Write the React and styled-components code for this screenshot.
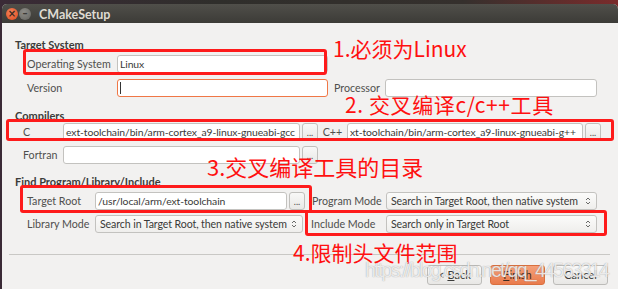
import React from 'react'
import styled, { createGlobalStyle } from 'styled-components'

const GlobalStyle = createGlobalStyle`
  body {
    margin: 0;
    background: #2f2e2b;
    font-family: Lato, 'Open Sans', sans-serif;
  }
`

const Spinner = () => (
  <svg width="6" height="10" viewBox="0 0 6 10">
    <path d="M1 4 L3 2 L5 4" fill="none" stroke="#6a6a68" strokeWidth="1" />
    <path d="M1 6 L3 8 L5 6" fill="none" stroke="#6a6a68" strokeWidth="1" />
  </svg>
)

export default () => (
  <Desktop>
    <GlobalStyle />
    <Window>
      <TitleBar>
        <CloseDot>×</CloseDot>
        <MinDot>–</MinDot>
        <Title>CMakeSetup</Title>
      </TitleBar>
      <Body>
        <Heading $top={15}>Target System</Heading>
        <SystemGrid>
          <Label>Operating System</Label>
          <Field>Linux</Field>
          <span />
          <span />
          <Label>Version</Label>
          <Field $focus>
            <Caret />
          </Field>
          <Label $pad={6}>Processor</Label>
          <Field />
        </SystemGrid>

        <Heading $top={12}>Compilers</Heading>
        <CompilerGrid>
          <Label>C</Label>
          <Field>ext-toolchain/bin/arm-cortex_a9-linux-gnueabi-gcc</Field>
          <DotButton>...</DotButton>
          <Label $center>C++</Label>
          <Field>xt-toolchain/bin/arm-cortex_a9-linux-gnueabi-g++</Field>
          <DotButton>...</DotButton>
          <Label>Fortran</Label>
          <Field />
          <DotButton>...</DotButton>
        </CompilerGrid>

        <Heading $top={11}>Find Program/Library/Include</Heading>
        <FindGrid>
          <Label>Target Root</Label>
          <PathCell>
            <Field>/usr/local/arm/ext-toolchain</Field>
            <DotButton>...</DotButton>
          </PathCell>
          <Label $pad={7}>Program Mode</Label>
          <Select>
            <span>Search in Target Root, then native system</span>
            <Spinner />
          </Select>
          <Label>Library Mode</Label>
          <Select $trim={2}>
            <span>Search in Target Root, then native system</span>
            <Spinner />
          </Select>
          <Label $pad={6}>Include Mode</Label>
          <Select>
            <span>Search only in Target Root</span>
            <Spinner />
          </Select>
        </FindGrid>

        <Separator />
        <ButtonRow>
          <PushButton>
            &lt; <u>B</u>ack
          </PushButton>
          <PushButton $primary>
            <u>F</u>inish
          </PushButton>
          <PushButton>Cancel</PushButton>
        </ButtonRow>
      </Body>
    </Window>

    <Mark $x={23} $y={49} $w={304} $h={26} />
    <Mark $x={6} $y={119} $w={608} $h={22} />
    <Mark $x={20} $y={185} $w={292} $h={28} />
    <Mark $x={305} $y={210} $w={302} $h={26} />

    <Note $x={333} $y={35} $size={21}>1.必须为Linux</Note>
    <Note $x={345} $y={91} $size={21} $spread={0.6}>2. 交叉编译c/c++工具</Note>
    <Note $x={207} $y={153} $size={22}>3.交叉编译工具的目录</Note>
    <Note $x={293} $y={239} $size={21}>4.限制头文件范围</Note>

    <Watermark>https://blog.csdn.net/qq_44563314</Watermark>
  </Desktop>
)

const Desktop = styled.div`
  position: relative;
  width: 618px;
  height: 289px;
  overflow: hidden;
  box-sizing: border-box;
  padding: 4px 0 0 2px;
  background: linear-gradient(90deg, #3a2a36 0%, #2f2e2b 35%, #35302d 75%, #7a2b2b 100%);
`

const Window = styled.div`
  width: 616px;
  height: 285px;
  display: flex;
  flex-direction: column;
  background: #f2f1f0;
  border-radius: 5px 5px 0 0;
  overflow: hidden;
`

const TitleBar = styled.div`
  height: 18px;
  flex: none;
  display: flex;
  align-items: center;
  padding: 1px 0 0 4px;
  background: linear-gradient(#504f4a, #3c3b37);
`

const CloseDot = styled.div`
  width: 12px;
  height: 12px;
  border-radius: 50%;
  background: radial-gradient(circle at 40% 35%, #f5835a, #dd4a1e);
  color: #3a2a20;
  font: bold 10px/12px 'DejaVu Sans', sans-serif;
  text-align: center;
`

const MinDot = styled(CloseDot)`
  margin-left: 1px;
  background: radial-gradient(circle at 40% 35%, #8e8d88, #64635f);
  color: #3c3b37;
`

const Title = styled.div`
  margin-left: 8px;
  color: #dfdbd2;
  font-size: 12.5px;
  font-weight: 700;
`

const Body = styled.div`
  flex: 1;
  padding: 0 8px 0 13px;
  color: #4a4a48;
`

const Heading = styled.div`
  margin-top: ${(p) => p.$top}px;
  font-size: 11px;
  line-height: 13px;
  font-weight: 700;
  color: #3c3c3a;
`

const SystemGrid = styled.div`
  display: grid;
  grid-template-columns: 90px 211px 57px 212px;
  grid-auto-rows: 18px;
  row-gap: 6px;
  margin: 4px 0 0 12px;
`

const CompilerGrid = styled.div`
  display: grid;
  grid-template-columns: 40px 237px 18px 29px 236px 18px;
  grid-auto-rows: 18px;
  row-gap: 5px;
  margin: 1px 0 0 8px;
`

const FindGrid = styled.div`
  display: grid;
  grid-template-columns: 68px 210px 81px 211px;
  grid-auto-rows: 18px;
  row-gap: 5px;
  margin: 4px 0 0 12px;
`

const PathCell = styled.div`
  display: grid;
  grid-template-columns: 192px 18px;
`

const Label = styled.div`
  font-size: 10.7px;
  line-height: 18px;
  white-space: nowrap;
  color: #4f4f4d;
  padding-left: ${(p) => p.$pad || 0}px;
  text-align: ${(p) => (p.$center ? 'center' : 'left')};
`

const Field = styled.div`
  box-sizing: border-box;
  height: 18px;
  padding: 0 2px;
  background: #fff;
  border: 1px solid ${(p) => (p.$focus ? '#f07746' : '#c3c2bf')};
  border-radius: 3px;
  font-size: 10.4px;
  letter-spacing: -0.1px;
  line-height: 16px;
  color: #3a3a38;
  white-space: nowrap;
  overflow: hidden;
`

const Caret = styled.span`
  display: inline-block;
  width: 1px;
  height: 12px;
  margin-top: 2px;
  background: #333;
  vertical-align: top;
`

const DotButton = styled.div`
  box-sizing: border-box;
  width: 16px;
  height: 18px;
  margin-left: 2px;
  border: 1px solid #c0bfbc;
  border-radius: 3px;
  background: linear-gradient(#f8f8f7, #e9e8e6);
  font-size: 9px;
  line-height: 18px;
  text-align: center;
  color: #4a4a48;
`

const Select = styled.div`
  box-sizing: border-box;
  height: 18px;
  margin-right: ${(p) => p.$trim || 0}px;
  padding: 0 5px 0 4px;
  display: flex;
  align-items: center;
  justify-content: space-between;
  gap: 2px;
  border: 1px solid #c3c2bf;
  border-radius: 3px;
  background: linear-gradient(#fbfbfa, #efeeec);
  font-size: 10.6px;
  letter-spacing: -0.1px;
  color: #3a3a38;
  white-space: nowrap;
  overflow: hidden;

  svg {
    flex: none;
  }
`

const Separator = styled.div`
  height: 1px;
  margin: 21px 0 0 -6px;
  background: #c9c8c5;
`

const ButtonRow = styled.div`
  display: flex;
  justify-content: flex-end;
  gap: 8px;
  margin: 10px 2px 0 0;
`

const PushButton = styled.div`
  box-sizing: border-box;
  width: 55px;
  height: 20px;
  border: 1px solid ${(p) => (p.$primary ? '#d9703f' : '#bdbcb9')};
  border-radius: 3px;
  background: ${(p) =>
    p.$primary ? 'linear-gradient(#f4a07a, #ea7b4c)' : 'linear-gradient(#fafaf9, #e8e7e5)'};
  font-size: 11px;
  line-height: 18px;
  text-align: center;
  color: ${(p) => (p.$primary ? '#3d2a20' : '#3c3c3a')};
`

const Mark = styled.div`
  position: absolute;
  left: ${(p) => p.$x}px;
  top: ${(p) => p.$y}px;
  width: ${(p) => p.$w}px;
  height: ${(p) => p.$h}px;
  box-sizing: border-box;
  border: 3px solid #fe1b1b;
  border-radius: 3px;
`

const Note = styled.div`
  position: absolute;
  left: ${(p) => p.$x}px;
  top: ${(p) => p.$y}px;
  font-family: 'Noto Sans CJK SC', sans-serif;
  font-size: ${(p) => p.$size}px;
  letter-spacing: ${(p) => p.$spread || 0}px;
  line-height: 26px;
  color: #ff1010;
  white-space: nowrap;
`

const Watermark = styled.div`
  position: absolute;
  left: 365px;
  top: 257px;
  font-family: 'Liberation Sans', sans-serif;
  font-size: 19.5px;
  line-height: 26px;
  letter-spacing: -1.7px;
  color: rgba(255, 255, 255, 0.78);
  text-shadow: 0 0 1px rgba(110, 110, 110, 0.7);
  white-space: nowrap;
`
